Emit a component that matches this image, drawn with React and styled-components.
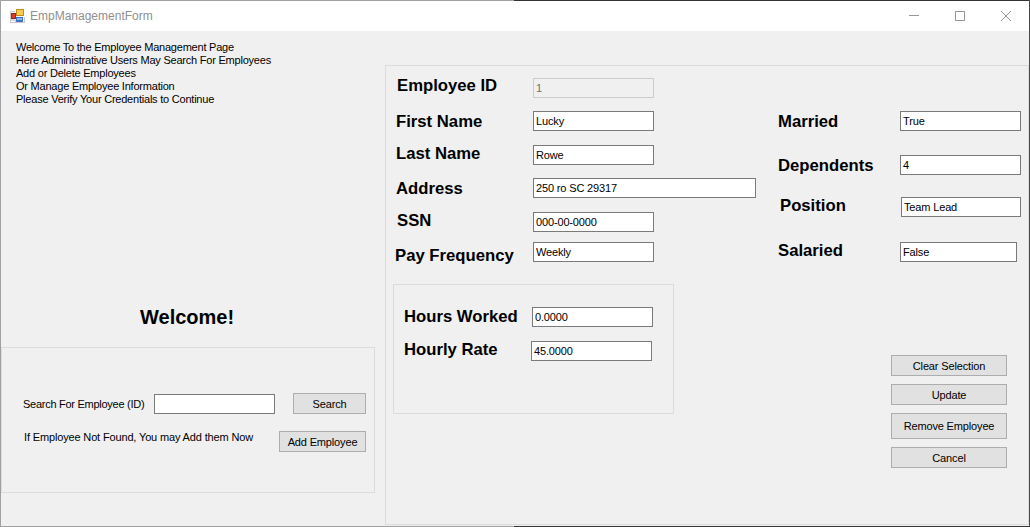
import React from "react";
import styled, { createGlobalStyle, css } from "styled-components";

const GlobalStyle = createGlobalStyle`
  html, body { margin: 0; padding: 0; background: #f0f0f0; }
  * { box-sizing: border-box; }
`;

export default function App() {
  return (
    <Window>
      <GlobalStyle />
      <WindowEdge />
      <TitleBar>
        <FormIcon />
        <TitleText>EmpManagementForm</TitleText>
        <WindowButtons>
          <svg width="12" height="12" viewBox="0 0 12 12"><path d="M1 5.5H11" stroke="#999" fill="none" /></svg>
          <svg width="12" height="12" viewBox="0 0 12 12"><rect x="1.5" y="1.5" width="9" height="9" stroke="#999" fill="none" /></svg>
          <svg width="12" height="12" viewBox="0 0 12 12"><path d="M1 1L11 11M11 1L1 11" stroke="#999" fill="none" /></svg>
        </WindowButtons>
      </TitleBar>
      <Body>
        <LeftColumn>
          <Intro>
            <div>Welcome To the Employee Management Page</div>
            <div>Here Administrative Users May Search For Employees</div>
            <div>Add or Delete Employees</div>
            <div>Or Manage Employee Information</div>
            <div>Please Verify Your Credentials to Continue</div>
          </Intro>
          <Welcome>Welcome!</Welcome>
          <SearchBox>
            <SearchRow>
              <SmallText>Search For Employee (ID)</SmallText>
              <SearchInput />
              <SearchButton>Search</SearchButton>
            </SearchRow>
            <NoteRow>
              <NoteText>If Employee Not Found, You may Add them Now</NoteText>
              <AddButton>Add Employee</AddButton>
            </NoteRow>
          </SearchBox>
        </LeftColumn>
        <DetailPanel>
          <MainColumn>
            <Field $top={12} $indent={11} $lift={4}>
              <Label $width={136}>Employee ID</Label>
              <Box value="1" disabled readOnly />
            </Field>
            <Field $top={13} $indent={10} $lift={-2}>
              <Label $width={137}>First Name</Label>
              <Box value="Lucky" readOnly />
            </Field>
            <Field $top={14} $indent={10} $lift={2}>
              <Label $width={137}>Last Name</Label>
              <Box value="Rowe" readOnly />
            </Field>
            <Field $top={13} $indent={10} $lift={-2}>
              <Label $width={137}>Address</Label>
              <Box $width={223} value="250 ro SC 29317" readOnly />
            </Field>
            <Field $top={14} $indent={11} $lift={2}>
              <Label $width={136}>SSN</Label>
              <Box value="000-00-0000" readOnly />
            </Field>
            <Field $top={10} $indent={9} $lift={-8}>
              <Label $width={138}>Pay Frequency</Label>
              <Box value="Weekly" readOnly />
            </Field>
            <PayBox>
              <Field $top={22} $indent={10}>
                <Label $width={128}>Hours Worked</Label>
                <Box value="0.0000" readOnly />
              </Field>
              <Field $top={14} $indent={10} $lift={3}>
                <Label $width={127}>Hourly Rate</Label>
                <Box value="45.0000" readOnly />
              </Field>
            </PayBox>
          </MainColumn>
          <SideColumn>
            <Field $top={45} $indent={1} $lift={-2}>
              <Label $width={122}>Married</Label>
              <Box value="True" readOnly />
            </Field>
            <Field $top={24} $indent={1} $lift={-2}>
              <Label $width={122}>Dependents</Label>
              <Box value="4" readOnly />
            </Field>
            <Field $top={22} $indent={3} $lift={2}>
              <Label $width={121}>Position</Label>
              <Box $width={120} value="Team Lead" readOnly />
            </Field>
            <Field $top={25} $indent={1} $lift={2}>
              <Label $width={122}>Salaried</Label>
              <Box $width={117} value="False" readOnly />
            </Field>
            <ActionStack>
              <ActionButton>Clear Selection</ActionButton>
              <ActionButton>Update</ActionButton>
              <ActionButton $tall>Remove Employee</ActionButton>
              <ActionButton>Cancel</ActionButton>
            </ActionStack>
          </SideColumn>
        </DetailPanel>
      </Body>
      <WindowEdge />
    </Window>
  );
}

function FormIcon() {
  return (
    <IconSlot>
      <svg width="15" height="16" viewBox="0 0 15 16" shapeRendering="crispEdges">
        <path d="M0 3.5H5M0.5 3V14M0 14.5H14M5.5 12V15M14.5 9V15" stroke="#c9c9c9" fill="none" />
        <rect x="1" y="5" width="5" height="6" fill="#8f2b26" />
        <rect x="2" y="6" width="3" height="4" fill="#e0392b" />
        <rect x="1" y="11" width="4" height="2" fill="#d9d9d9" />
        <rect x="6" y="1" width="8" height="7" fill="#c58a1a" />
        <rect x="7" y="2" width="6" height="5" fill="#f6cc4e" />
        <rect x="6" y="9" width="7" height="5" fill="#3b73c6" />
        <rect x="7" y="10" width="5" height="2" fill="#8fb5ea" />
      </svg>
    </IconSlot>
  );
}

const controlText = css`
  font-family: "Liberation Sans", Arial, sans-serif;
  font-size: 11px;
  letter-spacing: -0.15px;
  color: #000;
`;

const Window = styled.div`
  width: 1030px;
  height: 527px;
  background: #f0f0f0;
  border-left: 1px solid #a0a0a0;
  border-right: 1px solid #4a4a4a;
  display: flex;
  flex-direction: column;
  overflow: hidden;
  font-family: "Liberation Sans", Arial, sans-serif;
  color: #000;
`;

const WindowEdge = styled.div`
  height: 1px;
  flex: none;
  background: linear-gradient(to right, #a0a0a0 513px, #333 513px);
`;

const TitleBar = styled.div`
  height: 30px;
  flex: none;
  background: #fff;
  display: flex;
  align-items: center;
  padding-left: 9px;
`;

const IconSlot = styled.div`
  width: 16px;
  height: 16px;
  display: flex;
`;

const TitleText = styled.div`
  margin-left: 4px;
  font-size: 12px;
  color: #8f8f8f;
`;

const WindowButtons = styled.div`
  margin-left: auto;
  margin-right: 17px;
  display: flex;
  gap: 34px;
`;

const Body = styled.div`
  flex: 1;
  display: flex;
  min-height: 0;
`;

const LeftColumn = styled.div`
  width: 384px;
  flex: none;
  display: flex;
  flex-direction: column;
`;

const Intro = styled.div`
  ${controlText}
  letter-spacing: -0.22px;
  margin: 10px 0 0 15px;
  line-height: 13px;
`;

const Welcome = styled.div`
  margin: 199px 0 0 139px;
  font-size: 20px;
  font-weight: bold;
  line-height: 24px;
`;

const SearchBox = styled.div`
  margin-top: 18px;
  width: 374px;
  height: 146px;
  border: 1px solid #dcdcdc;
  padding: 45px 8px 0 21px;
`;

const SearchRow = styled.div`
  display: flex;
  align-items: center;
`;

const NoteRow = styled.div`
  display: flex;
  align-items: flex-start;
  margin-top: 17px;
`;

const SmallText = styled.div`
  ${controlText}
  letter-spacing: -0.27px;
  width: 131px;
  flex: none;
  white-space: nowrap;
`;

const NoteText = styled.div`
  ${controlText}
  width: 256px;
  flex: none;
  padding-left: 1px;
  white-space: nowrap;
`;

const SearchInput = styled.input`
  width: 121px;
  height: 20px;
  flex: none;
  border: 1px solid #7a7a7a;
  background: #fff;
`;

const Button = styled.button`
  ${controlText}
  background: #e1e1e1;
  border: 1px solid #adadad;
  border-radius: 0;
  padding: 0;
`;

const SearchButton = styled(Button)`
  width: 73px;
  height: 21px;
  margin-left: 18px;
`;

const AddButton = styled(Button)`
  width: 87px;
  height: 21px;
`;

const DetailPanel = styled.div`
  margin-top: 34px;
  margin-bottom: 1px;
  flex: 1;
  border: 1px solid #dcdcdc;
  display: flex;
`;

const MainColumn = styled.div`
  width: 391px;
  flex: none;
`;

const SideColumn = styled.div`
  flex: 1;
`;

const Field = styled.div`
  display: flex;
  align-items: center;
  height: 20px;
  margin-top: ${(p) => p.$top}px;
  padding-left: ${(p) => p.$indent}px;

  & > div {
    margin-bottom: ${(p) => p.$lift || 0}px;
  }
`;

const Label = styled.div`
  width: ${(p) => p.$width}px;
  flex: none;
  font-size: 16.7px;
  font-weight: bold;
  line-height: 20px;
  white-space: nowrap;
`;

const Box = styled.input`
  ${controlText}
  width: ${(p) => p.$width || 121}px;
  height: 20px;
  flex: none;
  padding: 0 2px;
  border: 1px solid #7a7a7a;
  background: #fff;

  &:disabled {
    background: #f0f0f0;
    border-color: #cccccc;
    color: #6d6d6d;
  }
`;

const PayBox = styled.div`
  margin: 22px 0 0 7px;
  width: 281px;
  height: 130px;
  border: 1px solid #dcdcdc;
`;

const ActionStack = styled.div`
  margin: 93px 0 0 114px;
  width: 116px;
  display: flex;
  flex-direction: column;
  gap: 8px;
`;

const ActionButton = styled(Button)`
  height: ${(p) => (p.$tall ? 26 : 21)}px;
`;
